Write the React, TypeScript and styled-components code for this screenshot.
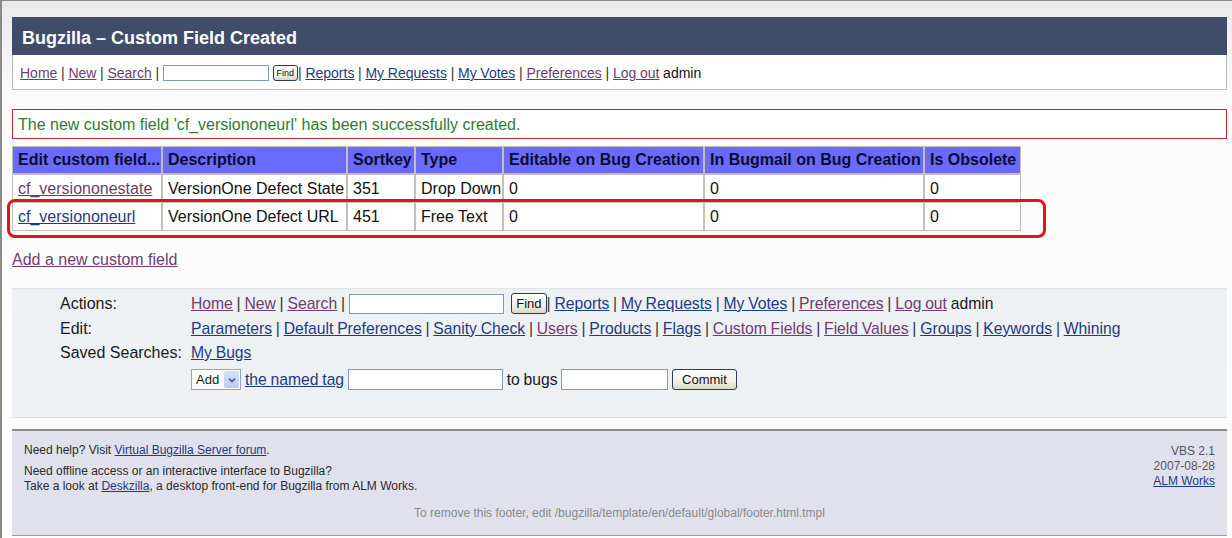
import React from "react";
import styled, { createGlobalStyle } from "styled-components";

const Global = createGlobalStyle`
  html, body { margin: 0; padding: 0; }
  body {
    font-family: "Liberation Sans", Arial, sans-serif;
    background: #fff;
    color: #111;
  }
`;

const Frame = styled.div`
  width: 1232px;
  height: 538px;
  box-sizing: border-box;
  border-left: 2px solid #8a8a86;
  border-top: 1px solid #8a8a86;
  padding: 16px 5px 0 10px;
  background: linear-gradient(#e9e9e9 0, #efefef 30px, #fbfbfb 90px, #fdfdfd 100%);
  overflow: hidden;
`;

const Header = styled.div`
  height: 38px;
  box-sizing: border-box;
  background: #3f4d6b;
  color: #fff;
  font-weight: bold;
  font-size: 18px;
  line-height: 38px;
  padding: 2px 0 0 10px;
`;

const NavBox = styled.div`
  height: 35px;
  box-sizing: border-box;
  border: 1px solid #bdbdbd;
  border-top: none;
  background: #fff;
  display: flex;
  align-items: center;
  padding: 2px 0 0 7px;
  font-size: 14px;
  white-space: pre;
  word-spacing: -0.2px;
`;

const Link = styled.a<{ $visited?: boolean }>`
  color: ${(p) => (p.$visited ? "#6e3d6e" : "#1f3a85")};
  text-decoration: underline;
  cursor: pointer;
`;

const Sep = styled.span`
  color: #333;
`;

const SmallInput = styled.span<{ $w: number; $h: number }>`
  display: inline-block;
  width: ${(p) => p.$w}px;
  height: ${(p) => p.$h}px;
  box-sizing: border-box;
  border: 1px solid #7f9db9;
  background: #fff;
  vertical-align: middle;
`;

const Btn = styled.span<{ $small?: boolean; $pad?: number }>`
  display: inline-flex;
  align-items: center;
  justify-content: center;
  box-sizing: border-box;
  height: ${(p) => (p.$small ? 16 : 21)}px;
  padding: 0 ${(p) => p.$pad ?? 3}px;
  font-size: ${(p) => (p.$small ? 9 : 13)}px;
  word-spacing: 0;
  border: 1px solid #2b3b5a;
  border-radius: 3px;
  background: linear-gradient(#ffffff, #f1efe6 60%, #dcd8c8);
  color: #111;
  vertical-align: middle;
`;

const Message = styled.div`
  margin-top: 19px;
  height: 30px;
  box-sizing: border-box;
  border: 1px solid #c8242e;
  color: #2e7d2e;
  font-size: 16px;
  line-height: 30px;
  padding-left: 5px;
  background: #fff;
`;

const TableWrap = styled.div`
  position: relative;
  margin-top: 7px;
  width: 1009px;
`;

const Table = styled.table`
  border-collapse: separate;
  border-spacing: 0;
  font-size: 16px;
  table-layout: fixed;
  width: 1009px;
  background: #fff;
`;

const Th = styled.th`
  background: #6a6aff;
  color: #0c0c30;
  font-weight: bold;
  text-align: left;
  height: 28px;
  box-sizing: border-box;
  padding: 0 0 0 5px;
  border: 1px solid #c4c0b6;
  white-space: nowrap;
  overflow: hidden;
`;

const Td = styled.td<{ $h: number }>`
  height: ${(p) => p.$h}px;
  box-sizing: border-box;
  padding: 1px 0 0 5px;
  border: 1px solid #c4c0b6;
  white-space: nowrap;
  color: #111;
`;

const Highlight = styled.div`
  position: absolute;
  left: -5px;
  top: 53px;
  width: 1039px;
  height: 39px;
  box-sizing: border-box;
  border: 3px solid #e0141a;
  border-radius: 8px;
  pointer-events: none;
`;

const AddLink = styled.div`
  margin-top: 20px;
  font-size: 16px;
  line-height: 18px;
`;

const Panel = styled.div`
  margin-top: 19px;
  background: #edf1f3;
  border-top: 1px solid #dfe4e7;
  border-bottom: 1px solid #d9dde0;
  padding: 2px 0 23px 48px;
  display: grid;
  grid-template-columns: 131px 1fr;
  font-size: 16px;
  color: #1a1a1a;
`;

const Label = styled.div<{ $h: number }>`
  height: ${(p) => p.$h}px;
  display: flex;
  align-items: center;
`;

const Row = styled.div<{ $h: number }>`
  height: ${(p) => p.$h}px;
  display: flex;
  align-items: center;
  white-space: pre;
  font-size: 15.7px;
  word-spacing: -0.6px;
`;

const Select = styled.span`
  display: inline-flex;
  align-items: center;
  box-sizing: border-box;
  width: 50px;
  height: 21px;
  border: 1px solid #8fa6c4;
  background: #fff;
  font-size: 13px;
  padding-left: 4px;
  justify-content: space-between;
  margin-right: 4px;
`;

const SelectArrow = styled.span`
  width: 15px;
  height: 17px;
  margin-right: 1px;
  background: linear-gradient(#d6e2fb, #b8ccf2);
  border-radius: 2px;
  display: flex;
  align-items: center;
  justify-content: center;
`;

const Footer = styled.div`
  margin-top: 11px;
  border-top: 2px solid #8c8c8c;
  border-bottom: 1px solid #9a9a9a;
  background: #e0e1ed;
  padding: 12px 12px 14px 12px;
  font-size: 12px;
  line-height: 15px;
  color: #2a2a2a;
`;

const FooterTop = styled.div`
  display: flex;
  justify-content: space-between;
`;

const FooterPara = styled.p<{ $gap?: number }>`
  margin: ${(p) => p.$gap ?? 0}px 0 0 0;
`;

const FooterRight = styled.div`
  text-align: right;
  color: #555;
  padding-top: 1px;
`;

const FooterNote = styled.div`
  margin-top: 12px;
  text-align: center;
  color: #8a8a8a;
`;

const FLink = styled.a`
  color: #1f3a85;
  text-decoration: underline;
`;

const rows = [
  { name: "cf_versiononestate", visited: true, desc: "VersionOne Defect State", sort: "351", type: "Drop Down", h: 28 },
  { name: "cf_versiononeurl", visited: false, desc: "VersionOne Defect URL", sort: "451", type: "Free Text", h: 29 },
];

const widths = [150, 185, 68, 88, 201, 220, 97];
const heads = [
  "Edit custom field...",
  "Description",
  "Sortkey",
  "Type",
  "Editable on Bug Creation",
  "In Bugmail on Bug Creation",
  "Is Obsolete",
];

export default function App() {
  return (
    <>
      <Global />
      <Frame>
        <Header>Bugzilla – Custom Field Created</Header>
        <NavBox>
          <Link $visited>Home</Link>
          <Sep> | </Sep>
          <Link $visited>New</Link>
          <Sep> | </Sep>
          <Link $visited>Search</Link>
          <Sep> | </Sep>
          <SmallInput $w={106} $h={16} />
          <Sep> </Sep>
          <Btn $small>Find</Btn>
          <Sep>| </Sep>
          <Link>Reports</Link>
          <Sep> | </Sep>
          <Link>My Requests</Link>
          <Sep> | </Sep>
          <Link>My Votes</Link>
          <Sep> | </Sep>
          <Link $visited>Preferences</Link>
          <Sep> | </Sep>
          <Link $visited>Log out</Link>
          <span> admin</span>
        </NavBox>

        <Message>The new custom field 'cf_versiononeurl' has been successfully created.</Message>

        <TableWrap>
          <Table>
            <colgroup>
              {widths.map((w, i) => (
                <col key={i} style={{ width: w }} />
              ))}
            </colgroup>
            <thead>
              <tr>
                {heads.map((h) => (
                  <Th key={h}>{h}</Th>
                ))}
              </tr>
            </thead>
            <tbody>
              {rows.map((r) => (
                <tr key={r.name}>
                  <Td $h={r.h}>
                    <Link $visited={r.visited}>{r.name}</Link>
                  </Td>
                  <Td $h={r.h}>{r.desc}</Td>
                  <Td $h={r.h}>{r.sort}</Td>
                  <Td $h={r.h}>{r.type}</Td>
                  <Td $h={r.h}>0</Td>
                  <Td $h={r.h}>0</Td>
                  <Td $h={r.h}>0</Td>
                </tr>
              ))}
            </tbody>
          </Table>
          <Highlight />
        </TableWrap>

        <AddLink>
          <Link $visited>Add a new custom field</Link>
        </AddLink>

        <Panel>
          <Label $h={25}>Actions:</Label>
          <Row $h={25}>
            <Link $visited>Home</Link>
            <Sep> | </Sep>
            <Link $visited>New</Link>
            <Sep> | </Sep>
            <Link $visited>Search</Link>
            <Sep> | </Sep>
            <SmallInput $w={155} $h={20} />
            <Sep>  </Sep>
            <Btn $pad={4}>Find</Btn>
            <Sep>| </Sep>
            <Link>Reports</Link>
            <Sep> | </Sep>
            <Link>My Requests</Link>
            <Sep> | </Sep>
            <Link>My Votes</Link>
            <Sep> | </Sep>
            <Link $visited>Preferences</Link>
            <Sep> | </Sep>
            <Link $visited>Log out</Link>
            <span> admin</span>
          </Row>

          <Label $h={25}>Edit:</Label>
          <Row $h={25}>
            <Link>Parameters</Link>
            <Sep> | </Sep>
            <Link>Default Preferences</Link>
            <Sep> | </Sep>
            <Link>Sanity Check</Link>
            <Sep> | </Sep>
            <Link $visited>Users</Link>
            <Sep> | </Sep>
            <Link>Products</Link>
            <Sep> | </Sep>
            <Link>Flags</Link>
            <Sep> | </Sep>
            <Link $visited>Custom Fields</Link>
            <Sep> | </Sep>
            <Link $visited>Field Values</Link>
            <Sep> | </Sep>
            <Link>Groups</Link>
            <Sep> | </Sep>
            <Link>Keywords</Link>
            <Sep> | </Sep>
            <Link>Whining</Link>
          </Row>

          <Label $h={24}>Saved Searches:</Label>
          <Row $h={24}>
            <Link>My Bugs</Link>
          </Row>

          <Label $h={29} />
          <Row $h={29}>
            <Select>
              Add
              <SelectArrow>
                <svg width="8" height="6" viewBox="0 0 8 6">
                  <path d="M1 1.5 L4 4.5 L7 1.5" stroke="#3a5a9a" strokeWidth="1.6" fill="none" />
                </svg>
              </SelectArrow>
            </Select>
            <Link>the named tag</Link>
            <Sep> </Sep>
            <SmallInput $w={155} $h={21} />
            <span> to bugs </span>
            <SmallInput $w={107} $h={21} />
            <Sep> </Sep>
            <Btn $pad={9}>Commit</Btn>
          </Row>
        </Panel>

        <Footer>
          <FooterTop>
            <div>
              <FooterPara>
                Need help? Visit <FLink>Virtual Bugzilla Server forum</FLink>.
              </FooterPara>
              <FooterPara $gap={6}>Need offline access or an interactive interface to Bugzilla?</FooterPara>
              <FooterPara>
                Take a look at <FLink>Deskzilla</FLink>, a desktop front-end for Bugzilla from ALM Works.
              </FooterPara>
            </div>
            <FooterRight>
              <div>VBS 2.1</div>
              <div>2007-08-28</div>
              <div>
                <FLink>ALM Works</FLink>
              </div>
            </FooterRight>
          </FooterTop>
          <FooterNote>
            To remove this footer, edit /bugzilla/template/en/default/global/footer.html.tmpl
          </FooterNote>
        </Footer>
      </Frame>
    </>
  );
}
